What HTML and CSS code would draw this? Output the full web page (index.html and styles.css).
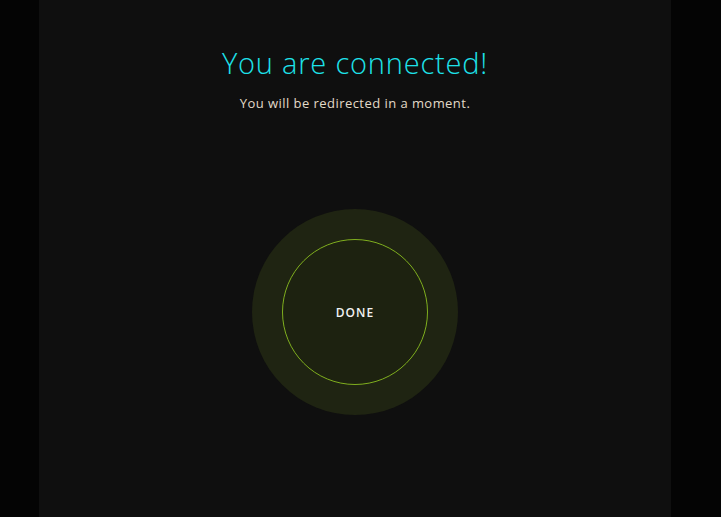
FILE: index.html
```html
<!DOCTYPE html>
<html>
<head>
<meta charset="utf-8">
<link rel="stylesheet" href="styles.css">
</head>
<body>
<div class="page">
  <main class="panel">
    <h1 class="title">You are connected!</h1>
    <p class="subtitle">You will be redirected in a moment.</p>
    <div class="halo">
      <div class="ring"><span class="done">DONE</span></div>
    </div>
  </main>
</div>
</body>
</html>
```

FILE: styles.css
```css
html, body {
  margin: 0;
  padding: 0;
  height: 100%;
  background: #040404;
}
.page {
  display: flex;
  justify-content: center;
  height: 517px;
  padding-left: 39px;
  padding-right: 50px;
  box-sizing: border-box;
}
.panel {
  width: 632px;
  height: 100%;
  background: #0f0f0f;
  display: flex;
  flex-direction: column;
  align-items: center;
  font-family: "Open Sans", "Liberation Sans", sans-serif;
}
.title {
  margin: 44px 0 0;
  font-size: 29px;
  font-weight: 300;
  line-height: 38px;
  color: #1ee2ea;
  letter-spacing: 0.8px;
}
.subtitle {
  margin: 12px 0 0;
  font-size: 13px;
  line-height: 18px;
  color: #e2dac8;
  letter-spacing: 0.45px;
}
.halo {
  margin-top: 97px;
  width: 206px;
  height: 206px;
  border-radius: 50%;
  background: #1f2412;
  display: flex;
  align-items: center;
  justify-content: center;
}
.ring {
  width: 144px;
  height: 144px;
  border-radius: 50%;
  border: 1px solid #7fae1e;
  background: #1d2210;
  display: flex;
  align-items: center;
  justify-content: center;
}
.done {
  color: #f2f2f2;
  font-size: 12px;
  font-weight: 600;
  letter-spacing: 1.1px;
}
```
